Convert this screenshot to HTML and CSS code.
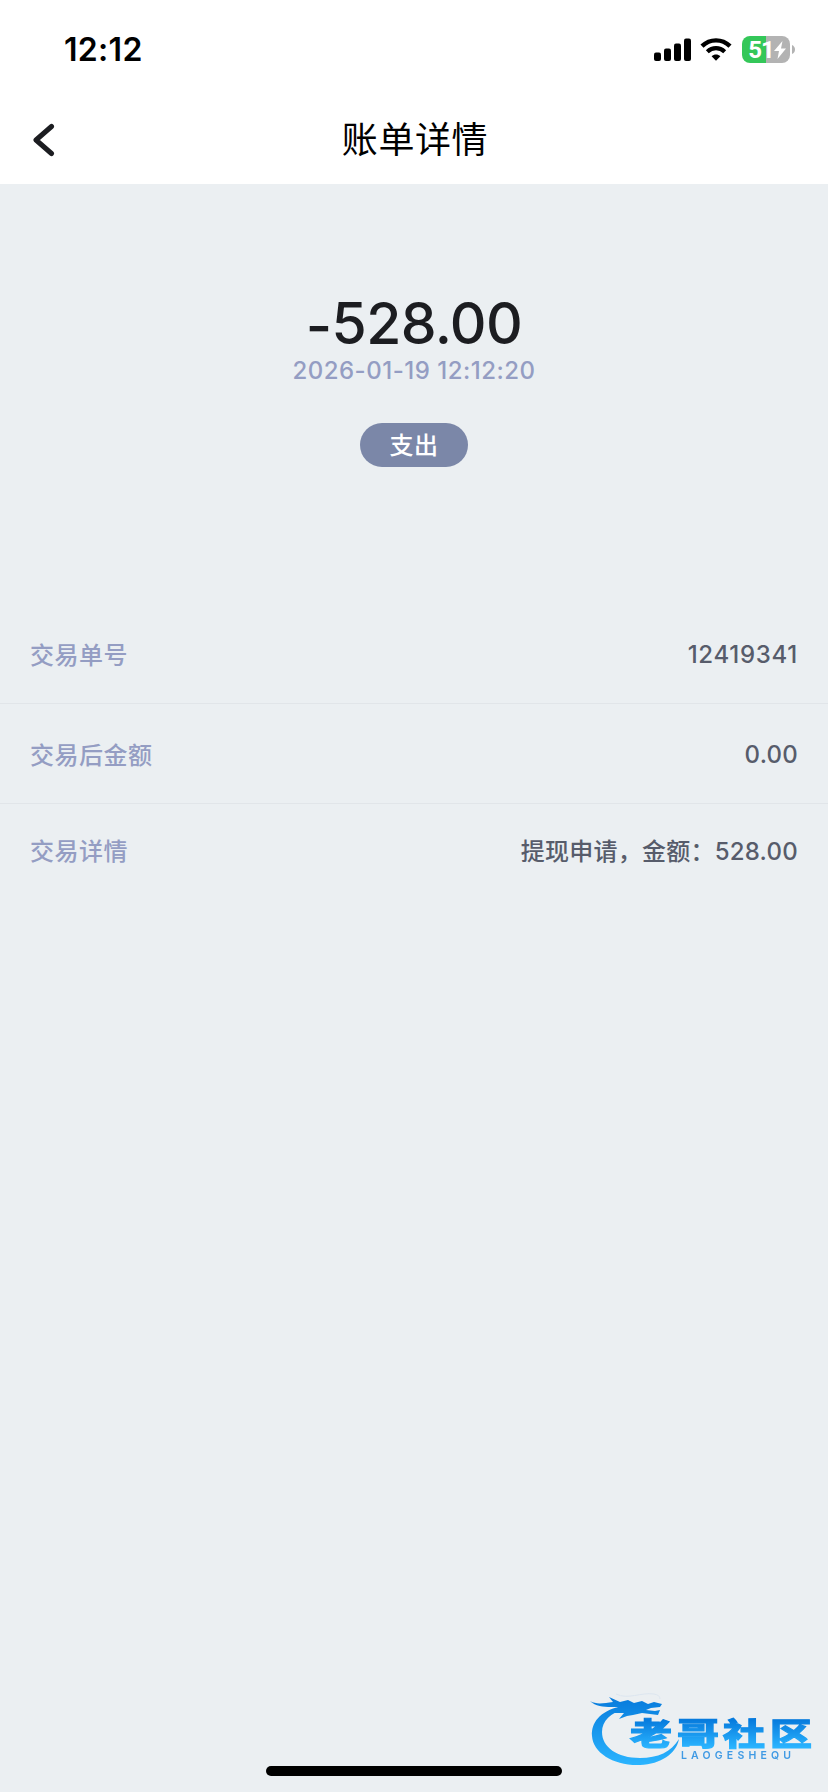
FILE: index.html
```html
<!DOCTYPE html>
<html lang="zh-CN">
<head>
    <meta charset="UTF-8">
    <meta name="viewport" content="width=device-width, initial-scale=1.0">
    <title>账单详情</title>
    <link rel="stylesheet" href="styles.css">
</head>
<body>
    <!-- Status Bar -->
    <div class="status-bar">
        <span class="time">12:12</span>
        <div class="status-icons">
            <svg class="signal" width="38" height="24" viewBox="0 0 38 24">
                <rect x="0" y="14.500" width="7" height="8.500" rx="2"/>
                <rect x="10" y="10.500" width="7" height="12.500" rx="2"/>
                <rect x="20" y="5.500" width="7" height="17.500" rx="2"/>
                <rect x="30" y="0.500" width="7" height="22.500" rx="2"/>
            </svg>
            <svg class="wifi" width="32" height="24" viewBox="0 0 32 24">
                <path d="M2 8.200C10 .4 22 .4 30 8.200" fill="none" stroke="#000" stroke-width="4.400"/>
                <path d="M7.300 13.700C12.400 8.900 19.600 8.900 24.700 13.700" fill="none" stroke="#000" stroke-width="4.200"/>
                <path d="M11.600 18.200C14.200 15.900 17.800 15.900 20.400 18.200L16 22.800Z"/>
            </svg>
            <div class="battery">
                <span>51</span>
                <svg width="12" height="18" viewBox="0 0 12 18"><path d="M8.500 0L0 10h5L3.500 18L12 7.500H7Z" fill="#fff"/></svg>
            </div>
            <svg class="battery-cap" width="3" height="9" viewBox="0 0 3 9"><path d="M0 0Q3 1.500 3 4.500T0 9Z" fill="#b3b3b3"/></svg>
        </div>
    </div>

    <!-- Header -->
    <header class="header">
        <a href="#" class="back" aria-label="返回">
            <svg width="22" height="34" viewBox="0 0 22 34">
                <path d="M18.500 3.500L3 17L18.500 30.500" fill="none" stroke="#1c1d21" stroke-width="5" stroke-linecap="round" stroke-linejoin="round"/>
            </svg>
        </a>
        <h1 class="title">账单详情</h1>
    </header>

    <!-- Amount -->
    <section class="summary">
        <div class="amount"><span class="minus">-</span>528.00</div>
        <div class="date">2026-01-19 12:12:20</div>
        <span class="tag">支出</span>
    </section>

    <!-- Details -->
    <section class="details">
        <div class="row">
            <span class="label">交易单号</span>
            <span class="value number serial">12419341</span>
        </div>
        <div class="row">
            <span class="label">交易后金额</span>
            <span class="value number">0.00</span>
        </div>
        <div class="row last">
            <span class="label">交易详情</span>
            <span class="value">提现申请，金额：528.00</span>
        </div>
    </section>

    <!-- Community logo -->
    <svg class="logo" width="258" height="112" viewBox="0 0 258 112">
        <defs>
            <linearGradient id="ring" gradientUnits="userSpaceOnUse" x1="0" y1="18" x2="0" y2="86">
                <stop offset="0" stop-color="#077bdc"/>
                <stop offset="1" stop-color="#2bb5ff"/>
            </linearGradient>
            <linearGradient id="word" gradientUnits="userSpaceOnUse" x1="0" y1="-34" x2="0" y2="4">
                <stop offset="0" stop-color="#077bdd"/>
                <stop offset="1" stop-color="#2ab4ff"/>
            </linearGradient>
        </defs>
        <path d="M49 27C30 31 21 43 22 56C23 73 44 86 70 85C91 84 106 74 109 59C101 72 88 78 70 78C47 78 32 67 32 52C32 41 41 32 54 30Z" fill="url(#ring)"/>
        <path d="M20 21C27 25 34 23 43 22L39 17L50 22L58 20L64 23L72 21L78 24L84 22L92 24L90 27L81 28L76 30L85 31L90 30L88 35L80 34L72 33L63 35L57 36L49 39L54 33L43 33L48 27C38 27 27 28 20 21Z" fill="url(#ring)"/>
        <path d="M46 14C58 20 71 12 84 14Q90 15 90 19" fill="none" stroke="#dce5ef" stroke-width="1"/>
        <g class="logo-name" fill="url(#word)" stroke="url(#word)" transform="translate(0 64.500) scale(1 .72)">
            <text x="60" y="0">老</text>
            <text x="107" y="0">哥</text>
            <text x="153" y="0">社</text>
            <text x="200" y="0">区</text>
        </g>
        <text class="logo-sub" x="111" y="78.500" textLength="110">LAOGESHEQU</text>
    </svg>

    <div class="home-bar"></div>
</body>
</html>
```

FILE: styles.css
```css
body {
    background-color: #ebeff2;
    font-family: Inter, "Noto Sans CJK SC", sans-serif;
    margin: 0;
    padding: 0;
    min-height: 1792px;
}

/* Status Bar */
.status-bar {
    background: #fff;
    height: 100px;
    display: flex;
    justify-content: space-between;
    box-sizing: border-box;
    padding: 29px 33px 0 64px;
}

.time {
    font-size: 32px;
    font-weight: 600;
    line-height: 41px;
    letter-spacing: 0.3px;
}

.status-icons {
    display: flex;
    align-items: center;
    height: 41px;
}

.wifi {
    margin-left: 8px;
}

.battery {
    display: flex;
    align-items: center;
    justify-content: center;
    box-sizing: border-box;
    width: 48px;
    height: 27px;
    margin-left: 10px;
    padding-left: 2px;
    border-radius: 8px;
    background: linear-gradient(90deg, #34c759 50%, #b3b3b3 50%);
    color: #fff;
    font-family: Roboto, sans-serif;
    font-size: 24px;
    font-weight: 700;
    letter-spacing: -1px;
}

.battery-cap {
    margin-left: 2px;
}

/* Header */
.header {
    background: #fff;
    height: 84px;
    display: grid;
    grid-template-columns: 100px 1fr 100px;
    align-items: center;
}

.back {
    display: flex;
    padding-left: 33px;
    padding-bottom: 4px;
}

.title {
    margin: 0;
    padding-bottom: 4px;
    padding-left: 2px;
    color: #000;
    font-size: 36px;
    font-weight: 400;
    line-height: 50px;
    letter-spacing: 0.6px;
    text-align: center;
}

/* Amount */
.summary {
    display: flex;
    flex-direction: column;
    align-items: center;
    height: 420px;
    box-sizing: border-box;
    padding-top: 105px;
}

.amount {
    color: #1c1d21;
    font-size: 57px;
    font-weight: 500;
    line-height: 70px;
    letter-spacing: -0.6px;
}

.minus {
    position: relative;
    top: 2px;
}

.date {
    color: #949dc3;
    font-size: 24px;
    font-weight: 450;
    line-height: 24px;
    letter-spacing: 0.5px;
}

.tag {
    margin-top: 40px;
    width: 108px;
    height: 44px;
    border-radius: 22px;
    background: #7b87a8;
    color: #fff;
    font-size: 24px;
    font-weight: 500;
    line-height: 46px;
    letter-spacing: 0.6px;
    text-align: center;
}

/* Details */
.row {
    display: flex;
    justify-content: space-between;
    align-items: center;
    box-sizing: border-box;
    height: 100px;
    padding: 0 30px;
    border-bottom: 1px solid #e1e5e9;
    font-size: 24px;
    letter-spacing: 0.5px;
}

.row.last {
    height: 91px;
    border-bottom: 0;
}

.label {
    color: #949dc3;
    font-weight: 500;
}

.value {
    color: #575c6b;
    font-weight: 500;
    letter-spacing: 0.25px;
}

.number {
    padding-top: 2px;
}

.serial {
    letter-spacing: 0.7px;
}

/* Logo and home bar sit over the page */
.logo {
    position: absolute;
    left: 570px;
    top: 1680px;
    filter: blur(0.5px);
}

.logo-name {
    font-family: "Noto Sans CJK SC", sans-serif;
    font-size: 42px;
    font-weight: 900;
    stroke-width: 1.5px;
}

.logo-sub {
    fill: #3f9ae4;
    font-size: 10.5px;
    font-weight: 600;
}

.home-bar {
    position: absolute;
    left: 266px;
    top: 1766px;
    width: 296px;
    height: 10px;
    border-radius: 5px;
    background: #000;
}
```
